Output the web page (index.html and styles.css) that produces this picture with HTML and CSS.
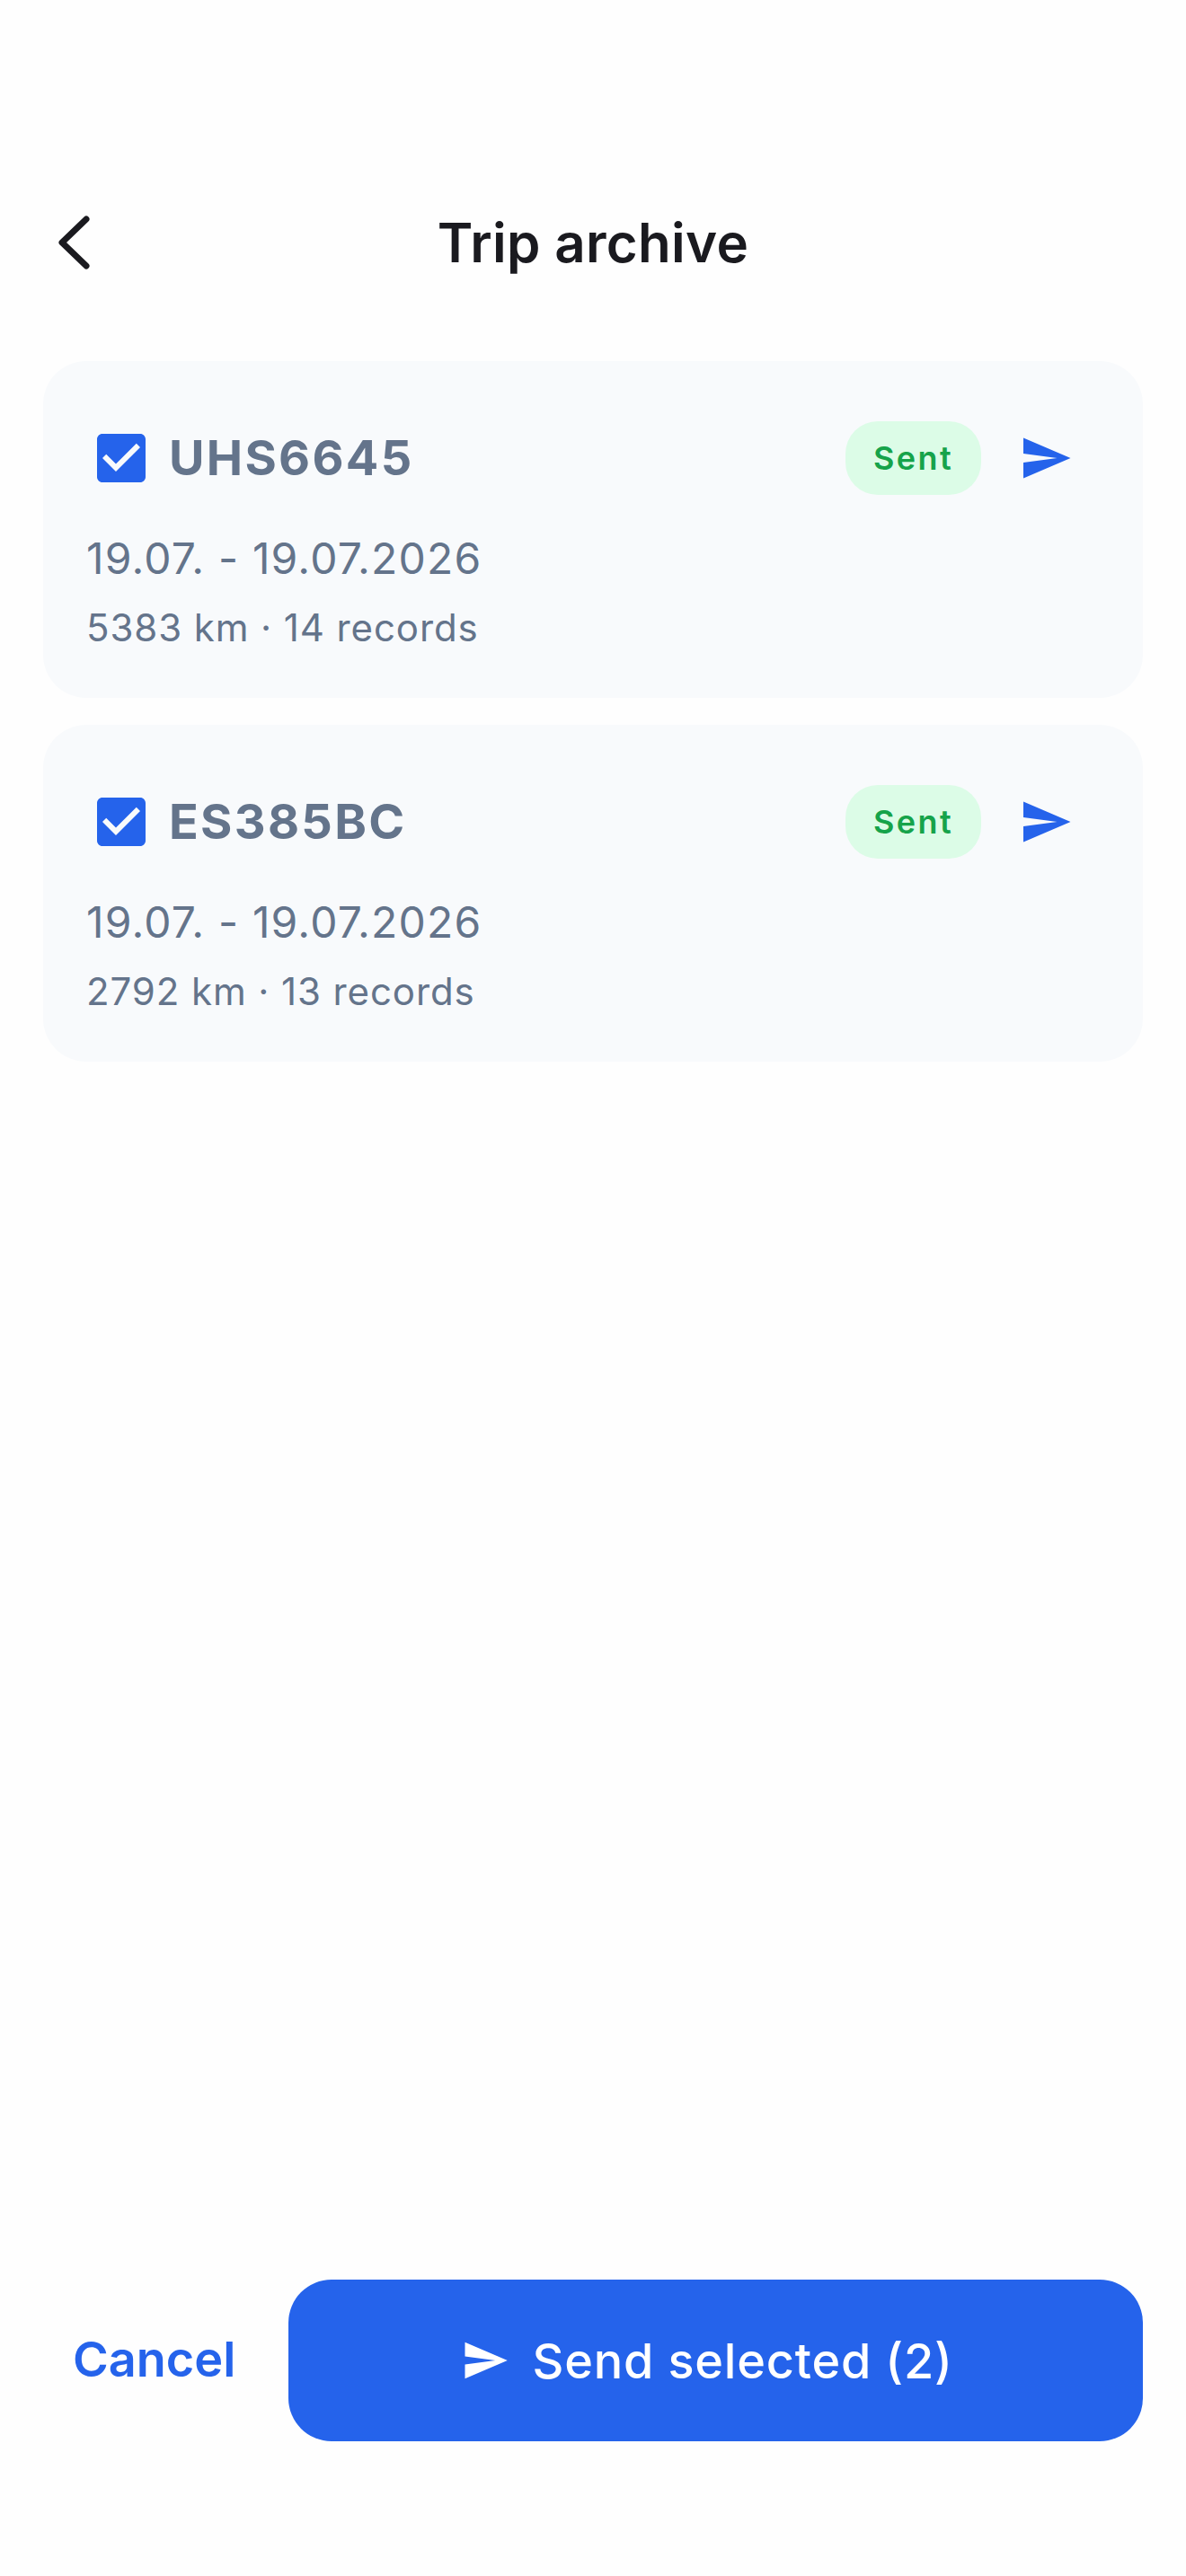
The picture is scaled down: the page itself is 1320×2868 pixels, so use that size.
FILE: index.html
```html
<!DOCTYPE html>
<html lang="en">
<head>
    <meta charset="UTF-8">
    <meta name="viewport" content="width=device-width, initial-scale=1.0">
    <title>Trip archive</title>
    <link rel="stylesheet" href="styles.css">
</head>
<body>
    <div class="screen">
        <!-- Top bar -->
        <header class="top-bar">
            <button class="back-button" aria-label="Back">
                <svg class="back-icon" viewBox="0 0 36 60"><path d="M32 4 L5 30 L32 56"/></svg>
            </button>
            <h1>Trip archive</h1>
        </header>

        <!-- Trip cards -->
        <main class="trip-list">
            <section class="trip-card">
                <div class="trip-head">
                    <svg class="checkbox" viewBox="0 0 24 24"><path d="M19 3H5c-1.1 0-2 .9-2 2v14c0 1.1.9 2 2 2h14c1.1 0 2-.9 2-2V5c0-1.1-.9-2-2-2zm-9 14l-5-5 1.41-1.41L10 14.17l7.59-7.59L19 8l-9 9z"/></svg>
                    <span class="plate">UHS6645</span>
                    <span class="badge">Sent</span>
                    <svg class="send-icon" viewBox="0 0 24 24"><path d="M2.01 21L23 12 2.01 3 2 10l15 2-15 2z"/></svg>
                </div>
                <p class="trip-dates">19.07. - 19.07.2026</p>
                <p class="trip-meta">5383 km · 14 records</p>
            </section>

            <section class="trip-card">
                <div class="trip-head">
                    <svg class="checkbox" viewBox="0 0 24 24"><path d="M19 3H5c-1.1 0-2 .9-2 2v14c0 1.1.9 2 2 2h14c1.1 0 2-.9 2-2V5c0-1.1-.9-2-2-2zm-9 14l-5-5 1.41-1.41L10 14.17l7.59-7.59L19 8l-9 9z"/></svg>
                    <span class="plate">ES385BC</span>
                    <span class="badge">Sent</span>
                    <svg class="send-icon" viewBox="0 0 24 24"><path d="M2.01 21L23 12 2.01 3 2 10l15 2-15 2z"/></svg>
                </div>
                <p class="trip-dates">19.07. - 19.07.2026</p>
                <p class="trip-meta">2792 km · 13 records</p>
            </section>
        </main>

        <!-- Bottom actions -->
        <footer class="actions">
            <button class="cancel-button">Cancel</button>
            <button class="send-button">
                <svg class="send-button-icon" viewBox="0 0 24 24"><path d="M2.01 21L23 12 2.01 3 2 10l15 2-15 2z"/></svg>
                <span>Send selected (2)</span>
            </button>
        </footer>
    </div>
</body>
</html>
```

FILE: styles.css
```css
* {
    box-sizing: border-box;
}
body {
    margin: 0;
    background-color: #fefefe;
    font-family: Inter, "Liberation Sans", sans-serif;
}
button {
    border: none;
    background: none;
    padding: 0;
    font-family: inherit;
    cursor: pointer;
}
.screen {
    height: 2868px;
    display: flex;
    flex-direction: column;
    padding: 216px 48px 150px;
}
/* Top bar */
.top-bar {
    position: relative;
    height: 108px;
    display: flex;
    align-items: center;
    justify-content: center;
}
.top-bar h1 {
    margin: 0;
    font-size: 60px;
    line-height: 72px;
    font-weight: 600;
    letter-spacing: 0.3px;
    color: #1a1a1f;
}
.back-button {
    position: absolute;
    left: 16px;
    top: 24px;
    width: 40px;
    height: 60px;
}
.back-icon {
    display: block;
    width: 36px;
    height: 60px;
    fill: none;
    stroke: #1a1a1f;
    stroke-width: 7;
    stroke-linecap: round;
    stroke-linejoin: round;
}
/* Trip cards */
.trip-list {
    margin-top: 78px;
    display: flex;
    flex-direction: column;
    gap: 30px;
}
.trip-card {
    height: 375px;
    padding: 66px 78px 0 48px;
    background-color: #f8fafc;
    border-radius: 48px;
}
.trip-head {
    display: flex;
    align-items: center;
    height: 84px;
}
.checkbox {
    width: 72px;
    height: 72px;
    margin-left: 3px;
    fill: #2563eb;
    fill-rule: evenodd;
}
.plate {
    margin-left: 17px;
    font-size: 54px;
    line-height: 84px;
    font-weight: 700;
    letter-spacing: 2.3px;
    color: #64748b;
}
.badge {
    margin-left: auto;
    width: 151px;
    height: 82px;
    display: flex;
    align-items: center;
    justify-content: center;
    background-color: #dcfce7;
    border-radius: 36px;
    font-size: 36px;
    font-weight: 600;
    letter-spacing: 2.4px;
    color: #16a34a;
}
.send-icon {
    width: 60px;
    height: 60px;
    margin-left: 42px;
    fill: #2563eb;
}
.trip-dates {
    margin: 34px 0 0;
    font-size: 48px;
    line-height: 72px;
    letter-spacing: 1.2px;
    color: #64748b;
}
.trip-meta {
    margin: 11px 0 0;
    font-size: 42px;
    line-height: 60px;
    letter-spacing: 0.9px;
    color: #64748b;
}
/* Bottom actions */
.actions {
    margin-top: auto;
    display: flex;
    align-items: center;
    gap: 59px;
}
.cancel-button {
    margin-left: 33px;
    margin-bottom: 4px;
    font-size: 54px;
    font-weight: 600;
    color: #2563eb;
}
.send-button {
    flex: 1;
    height: 180px;
    padding-right: 20px;
    display: flex;
    align-items: center;
    justify-content: center;
    gap: 26px;
    background-color: #2563eb;
    border-radius: 48px;
    font-size: 54px;
    font-weight: 500;
    letter-spacing: 0.8px;
    color: #ffffff;
}
.send-button-icon {
    width: 54px;
    height: 54px;
    fill: #ffffff;
}
```
